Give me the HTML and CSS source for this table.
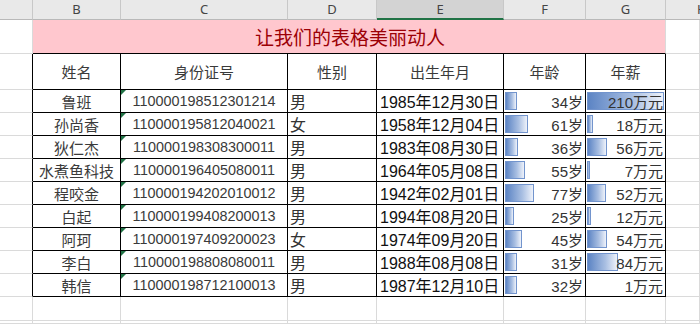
FILE: index.html
```html
<!DOCTYPE html>
<html lang="zh">
<head>
<meta charset="utf-8">
<title>让我们的表格美丽动人</title>
<link rel="stylesheet" href="styles.css">
</head>
<body>
<div class="sheet">
  <div class="ch"></div><div class="ch">B</div><div class="ch">C</div><div class="ch">D</div><div class="ch sel">E</div><div class="ch">F</div><div class="ch">G</div><div class="ch last"><span>H</span></div>

  <div class="c"></div><div class="title">让我们的表格美丽动人</div><div class="c"></div>

  <div class="c edge"></div><div class="c t th">姓名</div><div class="c t th">身份证号</div><div class="c t th">性别</div><div class="c t th">出生年月</div><div class="c t th">年龄</div><div class="c t th">年薪</div><div class="c"></div>

  <div class="c edge"></div><div class="c t name">鲁班</div><div class="c t id"><span class="flag"></span>110000198512301214</div><div class="c t sex">男</div><div class="c t date">1985年12月30日</div><div class="c t num"><span class="bar" style="width:12px"></span><span class="v">34岁</span></div><div class="c t num"><span class="bar" style="width:77px"></span><span class="v">210万元</span></div><div class="c"></div>

  <div class="c edge"></div><div class="c t name">孙尚香</div><div class="c t id"><span class="flag"></span>110000195812040021</div><div class="c t sex">女</div><div class="c t date">1958年12月04日</div><div class="c t num"><span class="bar" style="width:23px"></span><span class="v">61岁</span></div><div class="c t num"><span class="bar" style="width:6px"></span><span class="v">18万元</span></div><div class="c"></div>

  <div class="c edge"></div><div class="c t name">狄仁杰</div><div class="c t id"><span class="flag"></span>110000198308300011</div><div class="c t sex">男</div><div class="c t date">1983年08月30日</div><div class="c t num"><span class="bar" style="width:13px"></span><span class="v">36岁</span></div><div class="c t num"><span class="bar" style="width:20px"></span><span class="v">56万元</span></div><div class="c"></div>

  <div class="c edge"></div><div class="c t name">水煮鱼科技</div><div class="c t id"><span class="flag"></span>110000196405080011</div><div class="c t sex">男</div><div class="c t date">1964年05月08日</div><div class="c t num"><span class="bar" style="width:20px"></span><span class="v">55岁</span></div><div class="c t num"><span class="bar" style="width:3px"></span><span class="v">7万元</span></div><div class="c"></div>

  <div class="c edge"></div><div class="c t name">程咬金</div><div class="c t id"><span class="flag"></span>110000194202010012</div><div class="c t sex">男</div><div class="c t date">1942年02月01日</div><div class="c t num"><span class="bar" style="width:29px"></span><span class="v">77岁</span></div><div class="c t num"><span class="bar" style="width:19px"></span><span class="v">52万元</span></div><div class="c"></div>

  <div class="c edge"></div><div class="c t name">白起</div><div class="c t id"><span class="flag"></span>110000199408200013</div><div class="c t sex">男</div><div class="c t date">1994年08月20日</div><div class="c t num"><span class="bar" style="width:9px"></span><span class="v">25岁</span></div><div class="c t num"><span class="bar" style="width:4px"></span><span class="v">12万元</span></div><div class="c"></div>

  <div class="c edge"></div><div class="c t name">阿珂</div><div class="c t id"><span class="flag"></span>110000197409200023</div><div class="c t sex">女</div><div class="c t date">1974年09月20日</div><div class="c t num"><span class="bar" style="width:17px"></span><span class="v">45岁</span></div><div class="c t num"><span class="bar" style="width:20px"></span><span class="v">54万元</span></div><div class="c"></div>

  <div class="c edge"></div><div class="c t name">李白</div><div class="c t id"><span class="flag"></span>110000198808080011</div><div class="c t sex">男</div><div class="c t date">1988年08月08日</div><div class="c t num"><span class="bar" style="width:12px"></span><span class="v">31岁</span></div><div class="c t num"><span class="bar" style="width:31px"></span><span class="v">84万元</span></div><div class="c"></div>

  <div class="c edge"></div><div class="c t name">韩信</div><div class="c t id"><span class="flag"></span>110000198712100013</div><div class="c t sex">男</div><div class="c t date">1987年12月10日</div><div class="c t num"><span class="bar" style="width:12px"></span><span class="v">32岁</span></div><div class="c t num"><span class="v">1万元</span></div><div class="c"></div>

  <div class="c"></div><div class="c"></div><div class="c"></div><div class="c"></div><div class="c"></div><div class="c"></div><div class="c"></div><div class="c"></div>
  <div class="c"></div><div class="c"></div><div class="c"></div><div class="c"></div><div class="c"></div><div class="c"></div><div class="c"></div><div class="c"></div>
</div>
</body>
</html>
```
FILE: styles.css
```css
* { box-sizing: border-box; }
html, body { margin: 0; padding: 0; background: #fff; }
body { width: 700px; height: 324px; overflow: hidden; }

.sheet {
  display: grid;
  grid-template-columns: 33px 88px 167px 89px 127px 82px 80px 34px;
  grid-template-rows: 20px 34px 36px repeat(9, 23px) 24px 3px;
  width: 700px;
  height: 324px;
  overflow: hidden;
  font-family: "Noto Sans CJK SC", "Liberation Sans", sans-serif;
  color: #333;
}

.ch {
  background: #e9e9e9;
  border-right: 1px solid #c8c8c8;
  border-bottom: 1px solid #b9b9b9;
  display: flex;
  align-items: center;
  justify-content: center;
  font-family: "Noto Sans", "Liberation Sans", sans-serif;
  font-size: 13px;
  color: #444;
  padding-bottom: 1px;
  overflow: hidden;
}
.ch.sel {
  background: #d3d3d3;
  border-bottom: 2px solid #217346;
}
.ch.last {
  justify-content: flex-start;
  border-right: none;
}
.ch.last span {
  display: block;
  width: 3px;
  margin-left: 31px;
  overflow: hidden;
}

.c {
  position: relative;
  border-right: 1px solid #dadada;
  border-bottom: 1px solid #dadada;
  display: flex;
  align-items: center;
  white-space: nowrap;
}
.c.edge { border-right-color: #000; }
.c.t { border-right-color: #000; border-bottom-color: #000; }

.title {
  grid-column: span 6;
  background: #ffc7ce;
  color: #9c0006;
  border-right: 1px solid #dadada;
  border-bottom: 1px solid #000;
  display: flex;
  align-items: center;
  justify-content: center;
  font-size: 19px;
  padding-left: 2px;
  padding-bottom: 1px;
}

.th { justify-content: center; font-size: 15px; color: #3a3a3a; }
.name { justify-content: center; font-size: 15px; color: #3a3a3a; }
.id {
  justify-content: center;
  font-family: "Liberation Sans", "Noto Sans CJK SC", sans-serif;
  font-size: 14.4px;
  color: #3a3a3a;
}
.sex { padding-left: 2px; font-size: 16px; color: #333; }
.date {
  padding-left: 3px;
  font-family: "Liberation Sans", "Noto Sans CJK SC", sans-serif;
  font-size: 16px;
  color: #111;
}
.num {
  justify-content: flex-end;
  padding-right: 2px;
  font-family: "Liberation Sans", "Noto Sans CJK SC", sans-serif;
  font-size: 15px;
  color: #333;
}

.flag {
  position: absolute;
  left: 0;
  top: 0;
  width: 0;
  height: 0;
  border-top: 5px solid #217346;
  border-right: 5px solid transparent;
}

.bar {
  position: absolute;
  left: 1px;
  top: 2px;
  height: 18px;
  border: 1px solid #7294cd;
  background: linear-gradient(90deg, #5c84c4 0%, #a9bfe2 60%, #eef2fa 100%);
}
.v { position: relative; z-index: 1; }
```
